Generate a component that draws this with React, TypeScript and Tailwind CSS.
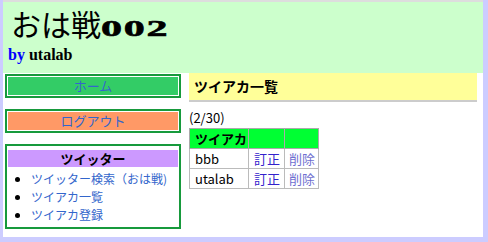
const jp = { fontFamily: '"Noto Sans CJK JP", "Noto Sans", sans-serif' };

const menu = ["ツイッター検索（おは戦)", "ツイアカ一覧", "ツイアカ登録"];

const rows = [{ name: "bbb" }, { name: "utalab" }];

function SideButton({ label, bg }: { label: string; bg: string }) {
  return (
    <div className="border-2 border-[#179a3c] bg-white p-px">
      <div className={`${bg} flex h-[18px] items-center justify-center text-[13px] text-[#3366cc]`}>{label}</div>
    </div>
  );
}

export default function App() {
  return (
    <div className="h-[242px] w-[488px] overflow-hidden bg-[#ccccff]" style={jp}>
      <div className="ml-[3px] h-[237px] w-[480px] border-t-2 border-[#dddddd] bg-white">
        <header className="h-[71px] bg-[#ccffcc] pl-[8px] pt-[3px]">
          <h1 className="flex items-baseline text-[30px] leading-[36px] text-black">
            <span style={{ fontFamily: '"Noto Sans CJK JP", serif' }}>おは戦</span>
            <span
              className="inline-block origin-left scale-x-[1.75] text-[24px] font-black tracking-[1px]"
              style={{ fontFamily: '"Liberation Serif", serif', WebkitTextStroke: "0.6px black" }}
            >
              002
            </span>
          </h1>
          <p
            className="-ml-[3px] text-[16px] font-bold leading-[18px] text-black"
            style={{ fontFamily: '"Liberation Serif", serif' }}
          >
            <span className="text-[#0000ff]">by</span> utalab
          </p>
        </header>

        <div className="flex">
          <aside className="ml-[2px] mt-px flex w-[176px] flex-col gap-[11px]">
            <SideButton label="ホーム" bg="bg-[#33cc66]" />
            <SideButton label="ログアウト" bg="bg-[#ff9966]" />
            <div className="h-[85px] border-2 border-[#179a3c] px-px pt-[4px]">
              <div className="flex h-[17px] items-center justify-center bg-[#cc99ff] text-[13px] font-bold text-black">
                ツイッター
              </div>
              <ul className="mt-[3px] list-disc pl-[23px] text-[12px] leading-[18px] text-[#3366cc]">
                {menu.map((m) => (
                  <li key={m} className="whitespace-nowrap marker:text-black">
                    {m}
                  </li>
                ))}
              </ul>
            </div>
          </aside>

          <main className="ml-[8px] w-[288px]">
            <div className="flex h-[29px] items-center border-b-2 border-[#cccccc] bg-[#ffff99] pl-[5px] text-[14px] font-bold text-black">
              ツイアカ一覧
            </div>
            <p className="mt-[8px] text-[13px] leading-[16px] text-black">(2/30)</p>
            <table className="mt-[2px] border-collapse text-[13px] text-black">
              <thead>
                <tr className="h-[20px] bg-[#00ff33]">
                  <th className="w-[59px] border border-[#aaaaaa] pl-[5px] text-left font-bold leading-[18px]">ツイアカ</th>
                  <th className="w-[36px] border border-[#aaaaaa]"></th>
                  <th className="w-[34px] border border-[#aaaaaa]"></th>
                </tr>
              </thead>
              <tbody>
                {rows.map((r) => (
                  <tr key={r.name} className="h-[20px]">
                    <td className="border border-[#bbbbbb] pl-[5px] leading-[18px]">{r.name}</td>
                    <td className="border border-[#bbbbbb] pl-[5px] leading-[18px] text-[#3322cc]">訂正</td>
                    <td className="border border-[#bbbbbb] pl-[4px] leading-[18px] text-[#6f6fd0]">削除</td>
                  </tr>
                ))}
              </tbody>
            </table>
          </main>
        </div>
      </div>
    </div>
  );
}
